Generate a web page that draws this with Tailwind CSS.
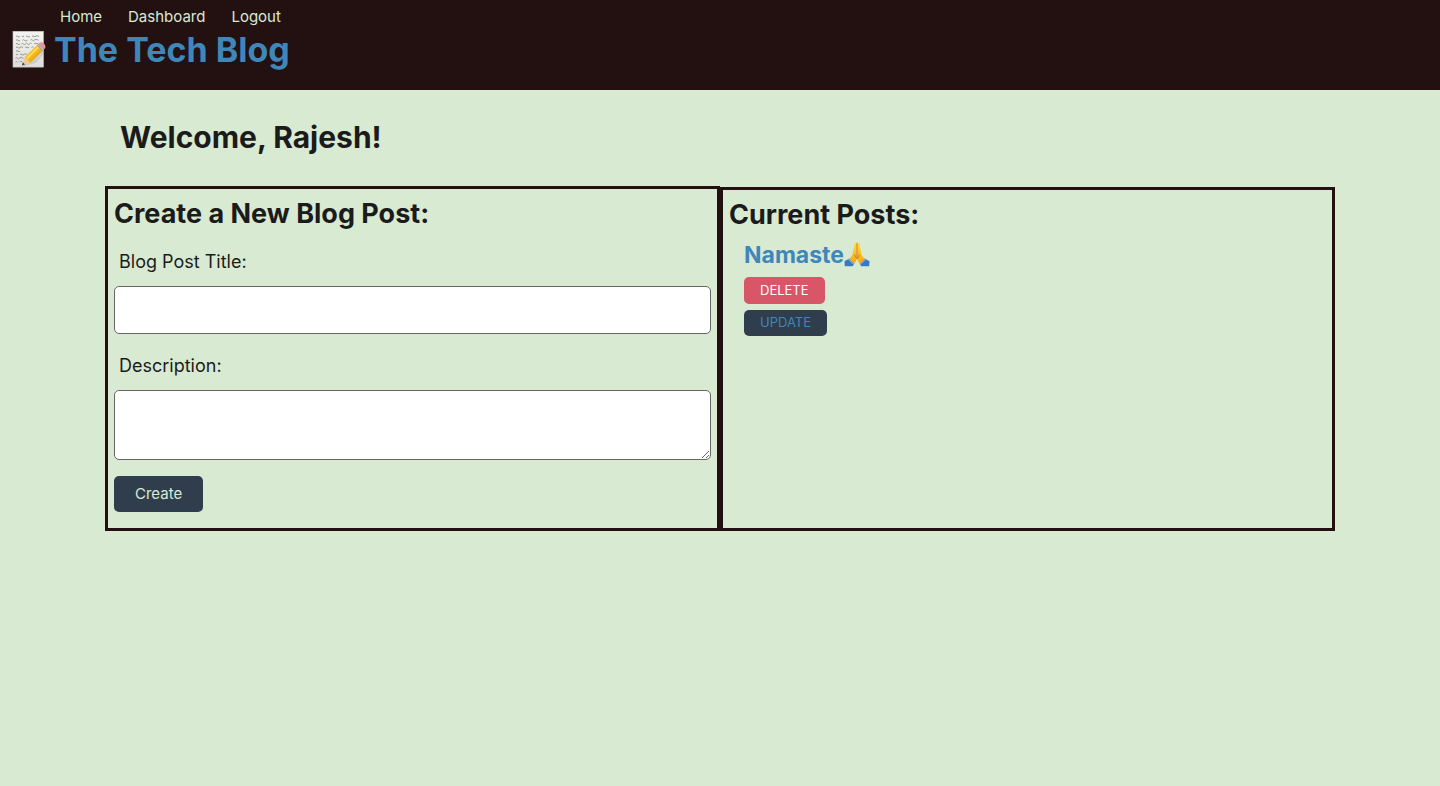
<!DOCTYPE html>
<html lang="en">
<head>
<meta charset="utf-8">
<meta name="viewport" content="width=device-width, initial-scale=1">
<title>The Tech Blog</title>
<script src="https://cdn.jsdelivr.net/npm/@tailwindcss/browser@4"></script>
</head>
<body class="min-h-screen bg-[#d9ead3] font-['Inter','Liberation_Sans',sans-serif] text-[#1b1b1b]">
<header class="bg-[#231112] px-3 pt-1 pb-[19px]">
  <nav class="flex gap-[26px] pl-12 text-[15px] leading-[25px] text-[#d9ead3]">
    <a href="#">Home</a>
    <a href="#">Dashboard</a>
    <a href="#">Logout</a>
  </nav>
  <h1 class="text-[34px] leading-[42px] font-bold">
    <a href="#" class="flex items-center gap-2 text-[#3f87ba]">
      <svg class="h-[38px] w-[34px] shrink-0" viewBox="0 0 34 38" aria-hidden="true">
        <defs>
          <linearGradient id="paper" x1="0" y1="0" x2="0" y2="1"><stop offset="0" stop-color="#f3f3f1"/><stop offset="1" stop-color="#dededc"/></linearGradient>
          <linearGradient id="wood" x1="0" y1="0" x2="1" y2="1"><stop offset="0" stop-color="#ffd84a"/><stop offset=".5" stop-color="#f6b91c"/><stop offset="1" stop-color="#c98208"/></linearGradient>
        </defs>
        <rect x="1" y=".3" width="30.4" height="35.8" fill="url(#paper)" stroke="#c9c9c7" stroke-width=".6"/>
        <g fill="none" stroke="#85837e" stroke-width=".8">
          <path d="M4 5.6q1-1.6 2 0t2-.4M10 5.6q1-1 2 0M14 5.4q1-1 2 .2t2-.2M20 5.4q1-1 2 0t2-.2 3 .2"/>
          <path d="M4 9.4q1-1.6 2 0t2-.2M10.5 9.4q1-1.4 2 0t3-.2M18.5 9.2q1-1.2 2 0t2-.2 4 .2"/>
          <path d="M4 13q1-1.6 2 0t2-.2M9.5 13q1-1.2 2 0t2-.2 2 .2 2-.2 2 .2M22 12.8q1-1 4 0"/>
          <path d="M4 16.6q1-1.4 2 0t2-.2 3 .2M13 16.4q1-1.2 2 0t2-.2M19.5 16.4q1-1 2 0"/>
          <path d="M4 20.2q1-1.4 2 0t2-.2"/>
          <path d="M4 23.8q1-1.4 2 0M8 23.6q1-1.2 2 0t2-.2 3 .2"/>
          <path d="M3.5 27.4q1-1.4 2 0t2-.2 4 .2"/>
          <path d="M3.5 31.2q1-1.4 2 0M7.5 31q1-1.2 3 0"/>
        </g>
        <path d="M10.5 35.5 24 32l7-8V14L20 21z" fill="#000" opacity=".09"/>
        <path d="M9.8 34.5 12.8 26 18.4 31.8z" fill="#edc993"/>
        <path d="m9.8 34.5 1.1-3.1 2.1 2z" fill="#4a3830"/>
        <path d="M12.8 26 24.8 14.2l5.7 5.7-12.1 11.9q-.6-1.8-2.2-2.1-.4-1.6-2-1.9z" fill="url(#wood)"/>
        <path d="m15.2 27.2 11-11" stroke="#ffe36a" stroke-width="1.6"/>
        <path d="m24.8 14.2 1.8-1.8 5.7 5.7-1.8 1.8z" fill="#929da0"/>
        <path d="m25.8 13.5 5.5 5.5" stroke="#d5dadb" stroke-width=".8"/>
        <path d="m26.6 12.4.7-.7q2.4-1.3 4.7 1t1 4.7l-.7.7z" fill="#ee8f94"/>
      </svg>
      <span>The Tech Blog</span>
    </a>
  </h1>
</header>
<main class="mx-auto w-full max-w-[1230px]">
  <h2 class="px-[15px] pt-6 pb-[26px] text-[30px] leading-[46px] font-bold">Welcome, Rajesh!</h2>
  <div class="grid grid-cols-2">
    <section class="border-[3px] border-[#231112] px-[6px] pt-1 pb-4">
      <h3 class="text-[27px] leading-[42px] font-bold">Create a New Blog Post:</h3>
      <form>
        <label for="title" class="block px-[5px] pt-3 pb-[10px] text-lg leading-[29px]">Blog Post Title:</label>
        <input id="title" type="text" class="block h-12 w-full rounded-[5px] border border-[#666] bg-white px-3">
        <label for="description" class="block px-[5px] pt-[17px] pb-[10px] text-lg leading-[29px]">Description:</label>
        <textarea id="description" class="block h-[70px] w-full resize-y rounded-[5px] border border-[#666] bg-white px-3 py-2"></textarea>
        <button type="submit" class="mt-4 h-9 rounded-[5px] bg-[#303d4d] px-[21px] text-[15px] text-[#d9ead3]">Create</button>
      </form>
    </section>
    <section class="mt-px border-[3px] border-[#231112] px-[6px] pt-1 pb-4">
      <h3 class="text-[27px] leading-[42px] font-bold">Current Posts:</h3>
      <article class="px-[15px]">
        <h4 class="text-[23px] leading-[38px] font-bold">
          <a href="#" class="flex items-center text-[#3f87ba]">Namaste
            <svg class="size-[26px]" viewBox="0 0 26 26" aria-hidden="true">
              <defs><linearGradient id="skin" x1="0" y1="0" x2="0" y2="1"><stop offset="0" stop-color="#ffdc45"/><stop offset="1" stop-color="#f5a617"/></linearGradient></defs>
              <path d="M.5 19.2 5.2 16.6 10.4 21.5 8.8 24.3H.8zM25.5 19.2l-4.7-2.6-5.2 4.9 1.6 2.8h8z" fill="#3979c4"/>
              <path d="m4.3 17.1 5.4 5.3M21.7 17.1l-5.4 5.3" stroke="#73ade4" stroke-width="1.2"/>
              <path d="M12.8.7C11.5-.2 10.6.9 10.4 2.5L8.6 11.6Q8.2 14.2 5.2 17l4.8 4.8q2.7-2 2.8-5.8zM13.2.7c1.3-.9 2.2.2 2.4 1.8l1.8 9.1q.4 2.6 3.4 5.4L16 21.8q-2.7-2-2.8-5.8z" fill="url(#skin)"/>
              <path d="M13 .9v15.9M10.7 12.4q.3 3.2 2.3 4.4 2-1.2 2.3-4.4" fill="none" stroke="#c77b10" stroke-width=".9"/>
            </svg>
          </a>
        </h4>
        <div class="flex flex-col items-start gap-[6px] pt-[3px]">
          <button type="button" class="h-[27px] rounded-[5px] bg-[#d75768] px-4 text-[13px] text-white">DELETE</button>
          <a href="#" class="flex h-[26px] items-center rounded-[5px] bg-[#303d4d] px-4 text-[13px] text-[#3f87ba]">UPDATE</a>
        </div>
      </article>
    </section>
  </div>
</main>
</body>
</html>
